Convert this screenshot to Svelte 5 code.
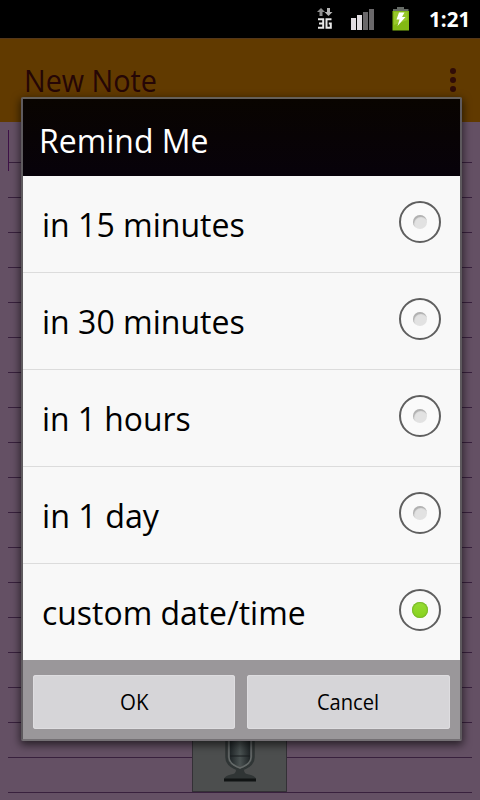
<script>
  const options = [
    { text: 'in 15 minutes', scale: 0.971 },
    { text: 'in 30 minutes', scale: 0.971 },
    { text: 'in 1 hours', scale: 0.964 },
    { text: 'in 1 day', scale: 0.978 },
    { text: 'custom date/time', scale: 0.967 }
  ];
  let selected = $state(4);
</script>

<div class="screen">
  <header class="status">
    <svg class="net" width="16" height="22" viewBox="0 0 16 22">
      <path d="M4 0 0 4h2.500v4h3V4H8z" fill="#8d8d8d" />
      <path d="M11.500 8l4-4H13V0h-3v4H7.500z" fill="#b5b5b5" />
      <path d="M1 11.200h5.200v8.600H1M2 15.500h4M14.500 11.200H9.500v8.600h4.300v-4.300h-2" fill="none" stroke="#e8e8e8" stroke-width="2" />
    </svg>
    <svg class="signal" width="24" height="22" viewBox="0 0 24 22">
      <path d="M0 10h5v12H0zM6 7h5v15H6z" fill="#e0dce0" />
      <path d="M12 4h5v18h-5zM18 1h5v21h-5z" fill="#6a686a" />
    </svg>
    <svg class="battery" width="18" height="24" viewBox="0 0 18 24">
      <path d="M5 0h7v2h4.500v3H1V2h4z" fill="#666b66" />
      <path d="M.5 4h16.500v19.500H.5z" fill="#83b814" />
      <path d="M2 5h13.500v8L2 18z" fill="#98c72b" />
      <path d="M7 5.500h5.500L10 10h3.500L5.500 19l2-6.500H4.500z" fill="#fff" />
    </svg>
    <span class="clock">1:21</span>
  </header>

  <div class="appbar">
    <span class="note">New Note</span>
    <div class="dots"><i></i><i></i><i></i></div>
  </div>

  <main class="paper">
    <div class="caret"></div>
    <div class="mic">
      <svg width="36" height="52" viewBox="0 0 36 52">
        <defs>
          <linearGradient id="metal">
            <stop offset="0" stop-color="#1c2224" />
            <stop offset=".5" stop-color="#4a5252" />
            <stop offset="1" stop-color="#1b2022" />
          </linearGradient>
        </defs>
        <path d="M7 0h22v26q0 8-11 8T7 26z" fill="url(#metal)" />
        <path d="M8 24h20" stroke="#181d1f" />
        <path d="M4.500 8v17q0 9 13.500 13 13.500-4 13.500-13V8" fill="none" stroke="#2f3535" stroke-width="2.500" />
        <path d="M7 8v17q0 7 11 11 11-4 11-11V8" fill="none" stroke="#646a69" stroke-width="1.500" />
        <path d="M14 38h8q0 4 5 4.500 6 1 7 4.500H2q1-3.500 7-4.500 5-.5 5-4.500z" fill="#303535" />
        <path d="M2 46.500h32v3H2z" fill="#111414" />
      </svg>
    </div>
  </main>

  <section class="dialog">
    <h1><span>Remind Me</span></h1>
    <ul>
      {#each options as option, i}
        <li>
          <button class="row" onclick={() => (selected = i)}>
            <span class="label" style:transform="scaleX({option.scale})">{option.text}</span>
            <span class="radio" class:on={selected === i}><i></i></span>
          </button>
        </li>
      {/each}
    </ul>
    <footer>
      <button class="action"><span class="ok">OK</span></button>
      <button class="action"><span class="cancel">Cancel</span></button>
    </footer>
  </section>
</div>

<style>
  :global(body) { margin: 0; }
  .screen {
    position: relative;
    display: flex;
    flex-direction: column;
    width: 480px;
    height: 800px;
    overflow: hidden;
    background: #645064;
    font-family: "Open Sans", "Noto Sans", sans-serif;
  }
  .status {
    display: flex;
    box-sizing: border-box;
    height: 38px;
    padding: 7px 10px 0 0;
    justify-content: flex-end;
    background: #000;
  }
  .net { margin: 1px 18px 0 0; }
  .signal { margin: 1px 17px 0 0; }
  .battery { margin-right: 19px; }
  .clock {
    width: 41px;
    color: #fff;
    font-size: 21px;
    font-weight: 700;
    line-height: 24px;
    transform: scaleX(.98);
    transform-origin: left;
    white-space: nowrap;
  }
  .appbar {
    display: flex;
    box-sizing: border-box;
    height: 84px;
    padding: 0 24px 2px;
    justify-content: space-between;
    align-items: center;
    background: #613a00;
    border-top: 1px solid #54371a;
  }
  .note { color: #250606; font-size: 30.5px; line-height: 40px; transform: scaleX(.943); transform-origin: left; }
  .dots { display: flex; flex-direction: column; gap: 3px; }
  .dots i { width: 6px; height: 6px; border-radius: 50%; background: #300c07; }
  .paper {
    display: flex;
    flex-direction: column;
    justify-content: space-between;
    align-items: center;
    box-sizing: border-box;
    flex: 1;
    margin: 0 8px;
    padding: 8px 0 8px;
    background: repeating-linear-gradient(transparent 0 34px, #38203d 34px 35px) 0 6px;
  }
  .caret { align-self: flex-start; width: 1px; height: 41px; background: #3d1046; }
  .mic {
    display: flex;
    box-sizing: border-box;
    justify-content: center;
    align-items: flex-end;
    width: 95px;
    height: 60px;
    margin-right: 1px;
    padding-bottom: 7px;
    background: #4c4e4e;
    border: 1px solid #343036;
  }
  .dialog {
    position: absolute;
    left: 21px;
    top: 97px;
    display: flex;
    flex-direction: column;
    box-sizing: border-box;
    width: 441px;
    height: 644px;
    border: 2px solid #5e5a5e;
    border-top-color: #65605b;
    border-bottom-color: #747074;
    border-radius: 2px;
    background: #f8f8f8;
    box-shadow: 0 3px 8px 1px rgba(0, 0, 0, .6);
  }
  h1 {
    display: flex;
    flex: none;
    align-items: center;
    box-sizing: border-box;
    height: 77px;
    margin: 0;
    padding: 5px 16px 0;
    background: linear-gradient(#090400, #07020a);
    color: #fff;
    font-size: 33px;
    font-weight: 400;
  }
  h1 span { transform: scaleX(.968); transform-origin: left; }
  ul { flex: none; height: 484px; margin: 0; padding: 0; list-style: none; }
  li { box-sizing: border-box; height: 97px; border-bottom: 1px solid #dcdcdc; }
  li:last-child { border: 0; height: 96px; }
  button { border: 0; font-family: inherit; color: #000; }
  .row {
    display: flex;
    width: 100%;
    height: 96px;
    padding: 0 19px;
    justify-content: space-between;
    align-items: center;
    background: none;
    font-size: 33px;
  }
  .label { white-space: nowrap; transform-origin: left; }
  .radio {
    display: flex;
    box-sizing: border-box;
    width: 42px;
    height: 42px;
    margin-top: -4px;
    align-items: center;
    justify-content: center;
    border: 2px solid #5f5f5f;
    border-radius: 50%;
    background: #fafafa;
  }
  .radio i {
    width: 14px;
    height: 14px;
    box-sizing: border-box;
    border-radius: 50%;
    background: #e2e2e2;
    box-shadow: inset 1px 2px 1px #b0b0b0;
  }
  .radio.on i {
    width: 16px;
    height: 16px;
    background: linear-gradient(#97dd35, #87d21c);
    box-shadow: inset 0 0 1px 1px #79b82b;
  }
  footer {
    display: flex;
    box-sizing: border-box;
    flex: 1;
    padding: 15px 10px 10px;
    gap: 12px;
    background: #9a979a;
  }
  .action {
    flex: 1;
    padding: 0 0 2px;
    border-radius: 3px;
    background: #d6d5d8;
    font-size: 22px;
    box-shadow: inset 0 0 0 1px #dedde0;
  }
  .action:first-child { flex: none; width: 202px; }
  .action span { display: inline-block; transform: scaleX(.915); }
  .action .ok { transform: scaleX(.93); }
</style>
